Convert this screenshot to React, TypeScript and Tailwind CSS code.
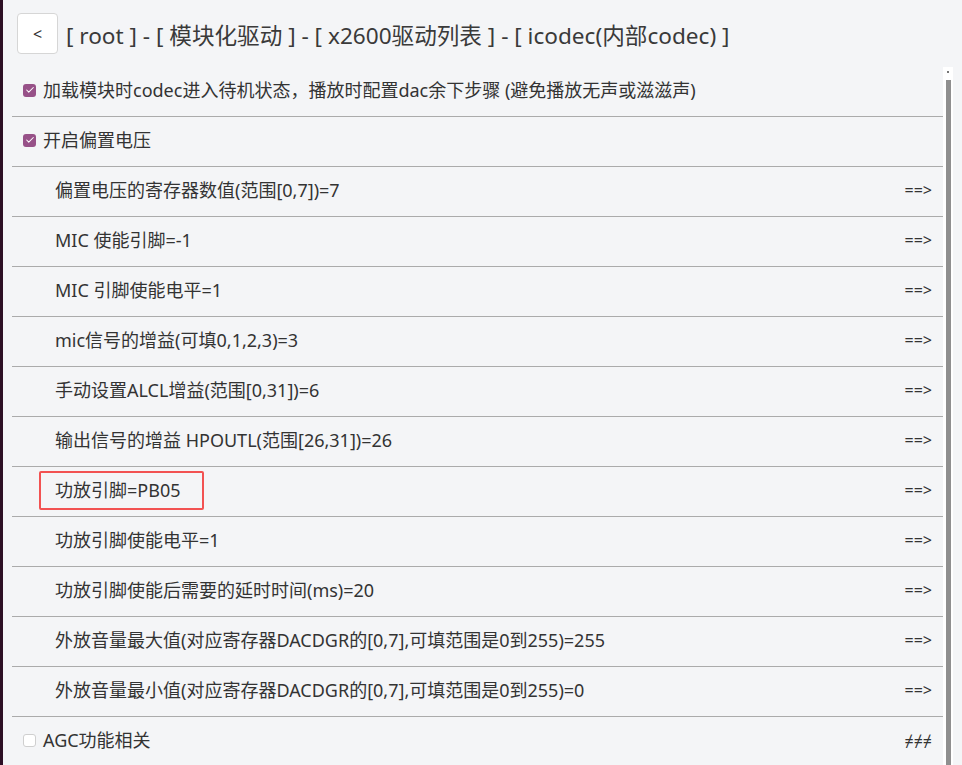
import { Check } from "lucide-react";

type Row = {
  label: string;
  checkbox?: boolean;
  checked?: boolean;
  arrow?: string;
  highlight?: boolean;
};

const rows: Row[] = [
  { label: "加载模块时codec进入待机状态，播放时配置dac余下步骤 (避免播放无声或滋滋声)", checkbox: true, checked: true },
  { label: "开启偏置电压", checkbox: true, checked: true },
  { label: "偏置电压的寄存器数值(范围[0,7])=7", arrow: "==>" },
  { label: "MIC 使能引脚=-1", arrow: "==>" },
  { label: "MIC 引脚使能电平=1", arrow: "==>" },
  { label: "mic信号的增益(可填0,1,2,3)=3", arrow: "==>" },
  { label: "手动设置ALCL增益(范围[0,31])=6", arrow: "==>" },
  { label: "输出信号的增益 HPOUTL(范围[26,31])=26", arrow: "==>" },
  { label: "功放引脚=PB05", arrow: "==>", highlight: true },
  { label: "功放引脚使能电平=1", arrow: "==>" },
  { label: "功放引脚使能后需要的延时时间(ms)=20", arrow: "==>" },
  { label: "外放音量最大值(对应寄存器DACDGR的[0,7],可填范围是0到255)=255", arrow: "==>" },
  { label: "外放音量最小值(对应寄存器DACDGR的[0,7],可填范围是0到255)=0", arrow: "==>" },
  { label: "AGC功能相关", checkbox: true, checked: false, arrow: "≠≠≠" },
];

function Box({ checked }: { checked?: boolean }) {
  return checked ? (
    <span className="flex h-[13px] w-[13px] shrink-0 items-center justify-center rounded-[3px] bg-[#975188]">
      <Check className="h-[10px] w-[10px] text-white" strokeWidth={2.5} />
    </span>
  ) : (
    <span className="h-[13px] w-[13px] shrink-0 rounded-[3px] border border-[#cfcfcf] bg-white" />
  );
}

export default function App() {
  return (
    <div
      className="flex h-[765px] w-[962px] overflow-hidden bg-[#f4f5f7] text-[#333]"
      style={{ fontFamily: '"Noto Sans", "Noto Sans CJK SC", sans-serif' }}
    >
      <div className="w-[3px] shrink-0 bg-[#2d0f25]" />
      <div className="flex min-w-0 flex-1 flex-col">
        {/* header */}
        <div className="flex h-[67px] shrink-0 items-center gap-[8px] pl-[14px] pt-[3px]">
          <button className="mb-[3px] flex h-[41px] w-[41px] items-center justify-center rounded-[4px] border border-[#d6d6d6] bg-white text-[16px] text-[#333]">
            &lt;
          </button>
          <div className="pt-[2px] text-[22.6px] text-[#3a3a3a]">
            [ root ] - [ 模块化驱动 ] - [ x2600驱动列表 ] - [ icodec(内部codec) ]
          </div>
        </div>

        <div className="flex min-h-0 flex-1">
          {/* list */}
          <div className="flex w-[940px] shrink-0 flex-col pl-[9px]">
            {rows.map((r, i) => (
              <div
                key={i}
                className={
                  "flex h-[50px] shrink-0 items-center justify-between pb-[3px] pr-[11px] text-[18px] " +
                  (i < rows.length - 1 ? "border-b border-[#ababab]" : "")
                }
              >
                {r.checkbox ? (
                  <div className="flex items-center gap-[7px] pl-[11px]">
                    <Box checked={r.checked} />
                    <span>{r.label}</span>
                  </div>
                ) : r.highlight ? (
                  <div className="ml-[27px] flex h-[39px] w-[165px] items-center rounded-[2px] border-2 border-[#f25252] pl-[14px]">
                    <span>{r.label}</span>
                  </div>
                ) : (
                  <span className="pl-[43px]">{r.label}</span>
                )}
                {r.arrow && <span className="text-[16px] text-[#333]">{r.arrow}</span>}
              </div>
            ))}
          </div>

          {/* scrollbar */}
          <div className="flex w-[10px] shrink-0 flex-col items-center bg-white">
            <div className="mt-[4px] h-[2px] w-[2px] bg-[#777]" />
            <div className="mt-[7px] w-[5px] flex-1 bg-[#8f8f8f]" />
          </div>
        </div>
      </div>
    </div>
  );
}
